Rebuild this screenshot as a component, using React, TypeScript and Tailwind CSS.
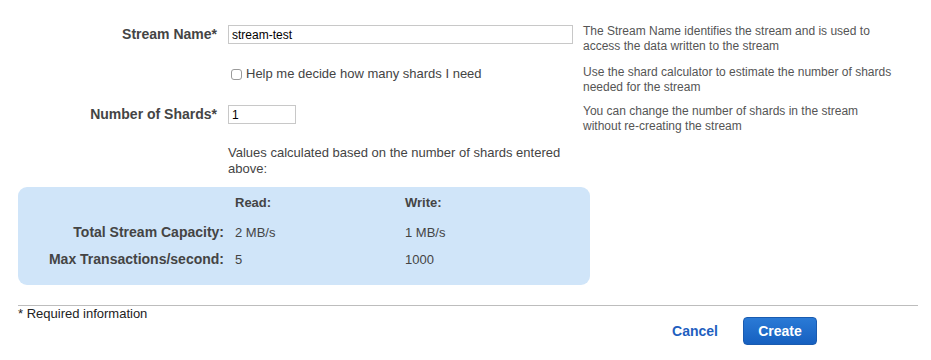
import React from "react";

const font = { fontFamily: '"Liberation Sans", Arial, sans-serif' };

export default function App() {
  return (
    <div className="w-[931px] h-[360px] bg-white text-[#444] overflow-hidden" style={font}>
      <div className="pt-[24px]">
        {/* Row 1 */}
        <div className="flex items-start h-[30px]">
          <div className="w-[217px] shrink-0 text-right font-bold text-[14px] leading-[20px]">Stream Name*</div>
          <div className="w-[345px] ml-[11px] shrink-0 pt-[1px]">
            <input
              defaultValue="stream-test"
              className="block w-[345px] h-[19px] border border-[#c8c8c8] px-[3px] text-[12px] text-black outline-none"
              style={font}
            />
          </div>
          <div className="ml-[10px] text-[12px] leading-[15px] text-[#555] w-[314px]">
            The Stream Name identifies the stream and is used to access the data written to the stream
          </div>
        </div>
        {/* Row 2 */}
        <div className="flex items-start mt-[10px] h-[30px]">
          <div className="w-[217px] shrink-0" />
          <label className="w-[345px] ml-[11px] shrink-0 flex items-center gap-[4px] text-[13px] mt-[2px] h-[16px] leading-[16px]">
            <span className="ml-[3px] mt-[1px] w-[11px] h-[11px] rounded-[3px] border border-[#9a9a9a] bg-white inline-block" />
            <span>Help me decide how many shards I need</span>
          </label>
          <div className="ml-[10px] text-[12px] leading-[15px] text-[#555] w-[314px] pt-[1px]">
            Use the shard calculator to estimate the number of shards needed for the stream
          </div>
        </div>
        {/* Row 3 */}
        <div className="flex items-start mt-[9px] h-[30px]">
          <div className="w-[217px] shrink-0 text-right font-bold text-[14px] leading-[20px] pt-[1px]">Number of Shards*</div>
          <div className="w-[345px] ml-[11px] shrink-0 pt-[2px]">
            <input
              defaultValue="1"
              className="block w-[68px] h-[19px] border border-[#c8c8c8] px-[3px] text-[12px] text-black outline-none"
              style={font}
            />
          </div>
          <div className="ml-[10px] text-[12px] leading-[15px] text-[#555] w-[314px] pt-[1px]">
            You can change the number of shards in the stream without re-creating the stream
          </div>
        </div>
        {/* Values text */}
        <div className="flex mt-[12px]">
          <div className="w-[217px] shrink-0" />
          <div className="w-[345px] ml-[11px] text-[13px] leading-[16px]">
            Values calculated based on the number of shards entered above:
          </div>
        </div>
        {/* Blue box */}
        <div className="ml-[18px] mt-[10px] w-[572px] h-[98px] rounded-[9px] bg-[#d0e5f9] pt-[8px]">
          <div className="flex text-[13px] font-bold leading-[16px]">
            <div className="w-[206px] shrink-0" />
            <div className="ml-[11px] w-[170px]">Read:</div>
            <div>Write:</div>
          </div>
          <div className="flex items-baseline leading-[16px] mt-[13px]">
            <div className="w-[206px] shrink-0 text-right font-bold text-[14px]">Total Stream Capacity:</div>
            <div className="ml-[11px] w-[170px] text-[13px]">2 MB/s</div>
            <div className="text-[13px]">1 MB/s</div>
          </div>
          <div className="flex items-baseline leading-[16px] mt-[10px]">
            <div className="w-[206px] shrink-0 text-right font-bold text-[14px]">Max Transactions/second:</div>
            <div className="ml-[11px] w-[170px] text-[13px]">5</div>
            <div className="text-[13px]">1000</div>
          </div>
        </div>
        {/* Divider */}
        <div className="ml-[18px] mt-[20px] w-[900px] border-t border-[#bdbdbd]" />
        <div className="flex items-start">
          <div className="ml-[18px] text-[13px] leading-[16px] text-[#222]">* Required information</div>
          <div className="ml-auto mr-[114px] flex items-center mt-[11px]">
            <button className="text-[14px] font-bold text-[#1f5fbf] mr-[25px]" style={font}>Cancel</button>
            <button
              className="w-[74px] h-[28px] rounded-[4px] text-white text-[14px] font-bold border border-[#1a5bb0] bg-gradient-to-b from-[#2a7ad6] to-[#1660c0]"
              style={font}
            >
              Create
            </button>
          </div>
        </div>
      </div>
    </div>
  );
}
